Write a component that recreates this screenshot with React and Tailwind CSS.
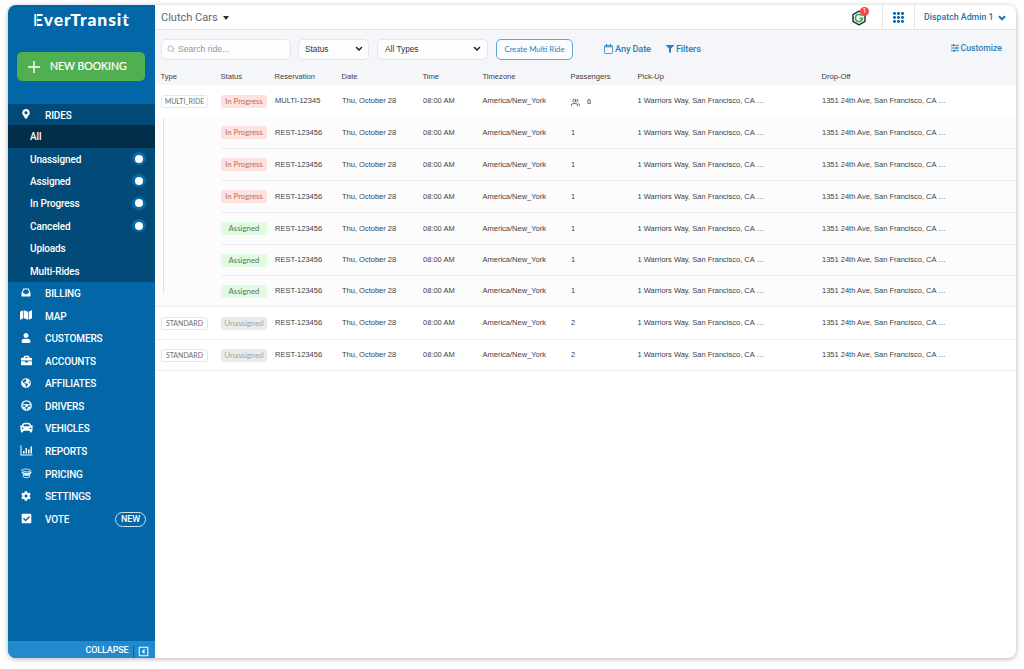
import React from "react";
import { FaMapMarkerAlt, FaInbox, FaMap, FaUser, FaBriefcase, FaGlobeAmericas, FaCar, FaCog, FaCheckSquare, FaRegCaretSquareLeft, FaFilter } from "react-icons/fa";
import { FiSearch, FiUsers } from "react-icons/fi";

const SANS = "font-['Liberation_Sans',sans-serif]";
const ROBOTO = "font-[Roboto,sans-serif]";
const LATO = "font-[Lato,sans-serif]";

const Wheel = ({ className }) => (
  <svg viewBox="0 0 24 24" className={className} fill="none" stroke="currentColor" strokeWidth="2.8">
    <circle cx="12" cy="12" r="10.2" />
    <path d="M2.5 10.5h19M4 15.5c4 0 5.500 2 5.500 6M20 15.500c-4 0-5.500 2-5.500 6" strokeWidth="2.4" />
    <path d="M8.500 10h7l-1.500 5h-4z" fill="currentColor" stroke="none" />
  </svg>
);
const Bars = ({ className }) => (
  <svg viewBox="0 0 26 22" className={className} fill="currentColor">
    <path d="M1 1h2v18h22v2H1zM6 12h3v5H6zM11 6h3v11h-3zM16 9h3v8h-3zM21 3h3v14h-3z" />
  </svg>
);
const Inbox = ({ className }) => (
  <svg viewBox="0 0 22 20" className={className} fill="currentColor">
    <path fillRule="evenodd" d="M5 1h12l4 10v7a1 1 0 0 1-1 1H2a1 1 0 0 1-1-1v-7zM6.500 3.500 3.700 11H7l1.500 3h5L15 11h3.300l-2.800-7.500z" />
  </svg>
);
const Money = ({ className }) => (
  <svg viewBox="0 0 24 22" className={className} fill="none" stroke="currentColor" strokeWidth="1.8">
    <path d="M1 4c5-4 15-4 21 1M1 4c5 4 15 5 21 1" />
    <path d="M2 8c6 4 13 4 20 0l-1 3c-6 3.500-12 3.500-17 0z" fill="currentColor" />
    <path d="M4 13.500c5 3 11 3 16 0M5 14v4c4 3 10 3 14 0v-4" />
  </svg>
);
const Chevron = ({ className }) => (
  <svg viewBox="0 0 8 6" className={className} fill="none" stroke="currentColor" strokeWidth="1.5" strokeLinecap="round" strokeLinejoin="round">
    <path d="M1.5 1.5 4 4.100l2.500-2.600" />
  </svg>
);
const BoldChevron = ({ className }) => (
  <svg viewBox="0 0 8 6" className={className} fill="none" stroke="currentColor" strokeWidth="2.1">
    <path d="M1 1.300 4 4.200l3-2.900" />
  </svg>
);
const Calendar = ({ className }) => (
  <svg viewBox="0 0 9 10" className={className} fill="none" stroke="currentColor">
    <rect x=".5" y="1.5" width="8" height="8" rx=".8" strokeWidth=".8" />
    <path d="M.5 2.8h8" strokeWidth="1" />
    <path d="M2.5 0v2M6.5 0v2" />
  </svg>
);
const Sliders = ({ className }) => (
  <svg viewBox="0 0 9 8" className={className} fill="none" stroke="currentColor" strokeWidth=".9">
    <path d="M0 1.3h8M0 4h8M0 6.7h8" />
    <path d="M2.600 0v2.6M5.800 2.7v2.6M3.2 5.4V8" strokeWidth="1.3" />
  </svg>
);

const rides = [
  { label: "Unassigned", dot: true, h: "h-[22px]" },
  { label: "Assigned", dot: true, h: "h-[22px]" },
  { label: "In Progress", dot: true, h: "h-[23px]" },
  { label: "Canceled", dot: true, h: "h-[22px]" },
  { label: "Uploads", h: "h-[23px]" },
  { label: "Multi-Rides", h: "h-[22px]" },
];
const nav = [
  { label: "BILLING", Icon: Inbox, h: "h-[22px]", size: "w-[10px] h-[9px]" },
  { label: "MAP", Icon: FaMap, h: "h-[23px]", size: "size-[12px]" },
  { label: "CUSTOMERS", Icon: FaUser, h: "h-[22px]", size: "size-[10px]" },
  { label: "ACCOUNTS", Icon: FaBriefcase, h: "h-[23px]" },
  { label: "AFFILIATES", Icon: FaGlobeAmericas, h: "h-[22px]", size: "size-[10px]" },
  { label: "DRIVERS", Icon: Wheel, h: "h-[23px]" },
  { label: "VEHICLES", Icon: FaCar, h: "h-[22px]", size: "size-[13px]" },
  { label: "REPORTS", Icon: Bars, h: "h-[24px]", size: "w-[13px] h-[11px]" },
  { label: "PRICING", Icon: Money, h: "h-[22px]" },
  { label: "SETTINGS", Icon: FaCog, h: "h-[22px]", size: "size-[10px]" },
  { label: "VOTE", Icon: FaCheckSquare, h: "h-[24px]", badge: "NEW" },
];

function NavRow({ label, Icon, h, size = "size-[11px]", badge }) {
  return (
    <div className={`flex items-center ${h}`}>
      <span className="flex w-[37px] shrink-0 pr-[1px] pb-px justify-center"><Icon className={size} /></span>
      <span className="flex-1 pt-px">{label}</span>
      {badge && <span className="mr-[8.5px] flex h-[15px] w-[31px] items-center justify-center rounded-full border border-white/80 pt-px text-[9px]">{badge}</span>}
    </div>
  );
}

function Logo() {
  return (
    <div className={`relative mt-[4px] ml-[25px] flex h-[22px] w-[99px] items-center text-[17.5px] font-black leading-none tracking-[0.95px] ${LATO}`}>
      EverTransit
      <i className="absolute left-[3px] top-[5px] h-[12px] w-px bg-[#0366a6]/70" />
      <i className="absolute left-[45px] top-[7px] h-[11px] w-px bg-[#0366a6]/70" />
      <i className="absolute left-[90px] top-[9px] h-px w-[8px] bg-[#0366a6]/60" />
    </div>
  );
}

function Sidebar() {
  return (
    <aside className={`flex w-[146.5px] shrink-0 flex-col bg-[#0366a6] text-[10px] font-medium tracking-[-0.14px] text-white ${ROBOTO}`}>
      <Logo />
      <button className={`mt-[21px] ml-[9px] flex h-[29px] w-[128px] items-center rounded-[5px] bg-[#50af50] pl-[11px] text-[10.5px] font-normal tracking-normal ${LATO}`}>
        <svg viewBox="0 0 12 12" className="size-[12px]" stroke="white" strokeWidth="1.4"><path d="M6 0v12M0 6h12" /></svg>
        <span className="ml-[10px] pt-px [-webkit-text-stroke:0.2px_white]">NEW BOOKING</span>
      </button>
      <div className="mt-[23px] bg-[#024a77]">
        <NavRow label="RIDES" Icon={FaMapMarkerAlt} h="h-[21px]" size="size-[10px]" />
        <div className="flex h-[23px] items-center bg-[#022e49] pl-[22px]">All</div>
        {rides.map((r) => (
          <div key={r.label} className={`flex items-center justify-between pl-[22px] pr-[9px] ${r.h}`}>
            <span>{r.label}</span>
            {r.dot && <span className="mb-px flex h-[13px] w-[14px] items-center justify-center rounded-full bg-[#0a69ab]"><i className="size-[8px] rounded-full bg-white" /></span>}
          </div>
        ))}
      </div>
      <div>{nav.map((n) => <NavRow key={n.label} {...n} />)}</div>
      <div className="mt-auto flex h-[17px] items-center justify-end bg-[#2189cd] pt-[3px] pr-[6px] text-[9px]">
        COLLAPSE
        <span className="ml-[4px] h-[13px] w-px bg-[#0366a6]" />
        <FaRegCaretSquareLeft className="ml-[4px] size-[11px]" />
      </div>
    </aside>
  );
}

const COLS = "grid grid-cols-[60px_54px_67px_81px_60px_88px_67px_184px_1fr] pl-[6.5px]";
const rows = [
  { type: "MULTI_RIDE", status: "In Progress", res: "MULTI-12345", pax: 6, h: "h-[32px]" },
  { status: "In Progress", pax: 1, h: "h-[32px]" },
  { status: "In Progress", pax: 1, h: "h-[32px]" },
  { status: "In Progress", pax: 1, h: "h-[32px]" },
  { status: "Assigned", pax: 1, h: "h-[32px]" },
  { status: "Assigned", pax: 1, h: "h-[31px]" },
  { status: "Assigned", pax: 1, h: "h-[31px]", last: true },
  { type: "STANDARD", status: "Unassigned", pax: 2, h: "h-[33px]" },
  { type: "STANDARD", status: "Unassigned", pax: 2, h: "h-[31px]" },
];
const tones = {
  "In Progress": "bg-[#fde2dd] text-[#b9705c]",
  Assigned: "bg-[#e1fbe1] text-[#5d7460]",
  Unassigned: "bg-[#ebebec] text-[#a2a3a5]",
};

function Row({ type, status, res = "REST-123456", pax, h, last }) {
  const line = "border-b border-[#ededee]";
  const fullLine = last || pax === 2;
  return (
    <div className={`${COLS} ${h} ${type ? "bg-white" : "bg-[#fcfcfc]"} ${fullLine ? line : ""}`}>
      <div className="flex items-center">
        {type && <span className={`flex h-[13px] w-[47px] items-center justify-center rounded-[3px] border border-[#e6e7ea] pt-px text-[7px] text-[#6c6f73] ${LATO}`}>{type}</span>}
      </div>
      <div className={`col-span-8 grid grid-cols-subgrid items-center ${pax === 1 && !last ? line : ""}`}>
        <span className={`flex h-[13px] w-[46px] items-center justify-center rounded-[3px] pt-px text-[7.8px] ${LATO} ${tones[status]}`}>{status}</span>
        <span>{res}</span>
        <span>Thu, October 28</span>
        <span>08:00 AM</span>
        <span className="-ml-[0.5px]">America/New_York</span>
        <span className={`flex items-center ${pax === 6 ? "pt-[2px]" : ""}`}>{pax === 6 && <FiUsers className="mr-[7px] size-[9px]" />}{pax}</span>
        <span className="-ml-[0.5px]">1 Warriors Way, San Francisco, CA …</span>
        <span>1351 24th Ave, San Francisco, CA …</span>
      </div>
    </div>
  );
}

export default function App() {
  const field = "flex h-[21px] items-center rounded-[5px] border border-[#e3e6ea] bg-[#fdfdfe]";
  return (
    <div className={`h-[669px] w-[1024px] bg-white px-[8px] pt-[5px] ${SANS}`}>
      <div className="flex h-[653px] overflow-hidden rounded-[8px] bg-white shadow-[0_1px_5px_rgba(0,0,0,0.3)]">
        <Sidebar />
        <main className="flex min-w-0 flex-1 flex-col">
          <header className={`flex h-[25px] items-center border-b border-[#e2e3e5] pl-[6.5px] ${ROBOTO}`}>
            <span className="pt-[2px] text-[11px] text-[#62676a]">Clutch Cars</span>
            <svg viewBox="0 0 6 4" className="ml-[5px] mt-px h-[4px] w-[6px]" fill="#1b3042"><path d="M0 0h6L3 4z" /></svg>
            <div className="relative ml-auto mr-[15px] mt-[2px] size-[16px]">
              <svg viewBox="0 0 16 16" className="size-[16px]">
                <path d="M8 1.2 14 4.6v6.8L8 14.8 2 11.4V4.6z" fill="#fff" stroke="#17334a" strokeWidth="1.5" strokeLinejoin="round" />
                <path d="M10.800 5.8A3.600 3.600 0 1 0 11.500 8.300H8.400" fill="none" stroke="#48ad51" strokeWidth="1.8" />
              </svg>
              <span className="absolute -top-[3px] left-[9px] flex size-[9px] items-center justify-center rounded-full bg-[#fb4449] text-[7px] leading-none text-white">1</span>
            </div>
            <div className="flex h-full w-[33px] items-center justify-center border-x border-[#e2e5e8]">
              <svg viewBox="0 0 11 11" className="mt-px size-[11px]" fill="#0b62a5">
                {[0, 4, 8].map((y) => [0, 4, 8].map((x) => <rect key={`${x}-${y}`} x={x} y={y} width="3" height="3" rx="1.4" />))}
              </svg>
            </div>
            <div className="flex w-[101px] items-center pl-[9px] pt-[2px] text-[8.8px] font-medium text-[#2275b1]">
              Dispatch Admin 1<BoldChevron className="ml-[4px] h-[6px] w-[8px]" />
            </div>
          </header>
          <div className="flex h-[38px] items-center bg-[#f4f6fa] pl-[6.5px]">
            <div className={`${field} w-[130px] pl-[5px] text-[8.6px] text-[#929699]`}><FiSearch className="mr-[3px] size-[8px]" />Search ride...</div>
            <div className={`${field} ml-[7px] w-[71px] justify-between pl-[6px] pr-[5px] text-[8.3px] text-[#333]`}>Status<Chevron className="h-[6px] w-[8px] text-[#12293b]" /></div>
            <div className={`${field} ml-[8px] w-[111px] justify-between pl-[7px] pr-[6px] text-[8.3px] text-[#333]`}>All Types<Chevron className="h-[6px] w-[8px] text-[#12293b]" /></div>
            <button className={`ml-[8px] flex h-[21px] w-[77px] items-center justify-center rounded-[5px] border border-[#64a5d2] bg-[#fafcfe] pt-px text-[7.8px] text-[#2d80bb] ${LATO}`}>Create Multi Ride</button>
            <div className={`ml-[31px] flex items-center text-[9.2px] font-medium tracking-[-0.12px] text-[#2b80b9] ${ROBOTO}`}>
              <Calendar className="mr-[2px] h-[10px] w-[9px]" />Any Date
              <FaFilter className="ml-[15px] mr-[2px] size-[8px]" />Filters
            </div>
            <div className={`ml-auto mr-[14px] flex items-center pb-px text-[8.7px] font-medium text-[#2b80b9] ${ROBOTO}`}><Sliders className="mr-px h-[8px] w-[9px]" />Customize</div>
          </div>
          <div className={`${COLS} h-[17px] items-center bg-[#f4f6fa] text-[7.6px] text-[#3d4144]`}>
            {["Type", "Status", "Reservation", "Date", "Time", "Timezone", "Passengers", "Pick-Up", "Drop-Off"].map((c) => <span key={c} className="-ml-[0.5px]">{c}</span>)}
          </div>
          <div className="relative text-[7.5px] text-[#3d4144]">
            {rows.map((r, i) => <Row key={i} {...r} />)}
            <div className="absolute left-[8.5px] top-[33px] h-[174px] w-px bg-[#dfe0e2]" />
          </div>
        </main>
      </div>
    </div>
  );
}
